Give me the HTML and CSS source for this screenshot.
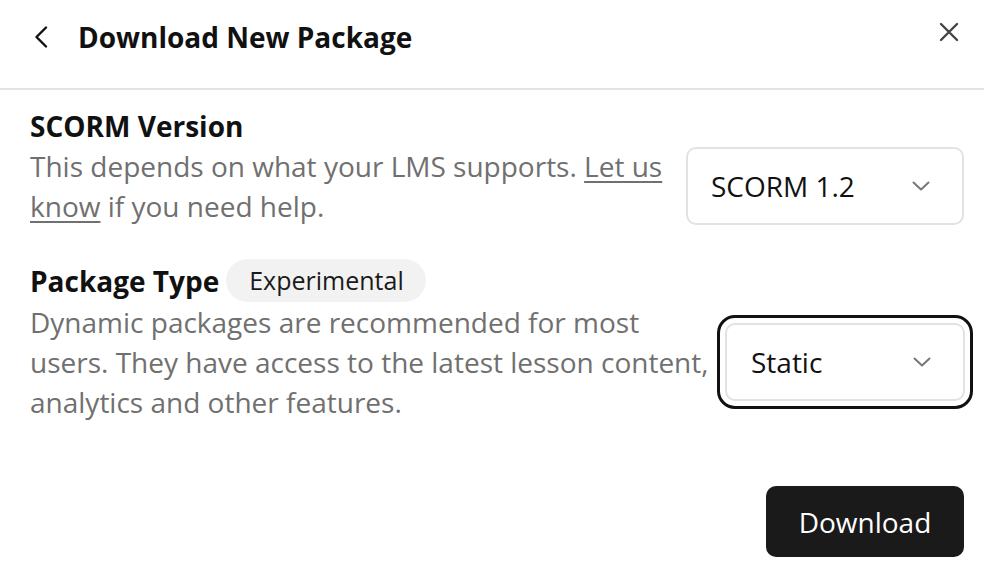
FILE: index.html
```html
<!DOCTYPE html>
<html lang="en">
<head>
<meta charset="utf-8">
<link rel="stylesheet" href="styles.css">
</head>
<body>
<div class="dialog">
  <header class="header">
    <button class="icon-btn back" aria-label="Back">
      <svg width="14" height="22" viewBox="0 0 14 22"><path d="M12 1.5 L2.5 11 L12 20.5" fill="none" stroke="#111" stroke-width="2.4" stroke-linecap="round" stroke-linejoin="round"/></svg>
    </button>
    <h1 class="title">Download New Package</h1>
    <button class="icon-btn close" aria-label="Close">
      <svg width="20" height="20" viewBox="0 0 20 20"><path d="M2 2 L18 18 M18 2 L2 18" fill="none" stroke="#444" stroke-width="2.4" stroke-linecap="round"/></svg>
    </button>
  </header>
  <main class="content">
    <section class="field">
      <div class="field-head">
        <h2 class="label">SCORM Version</h2>
      </div>
      <div class="field-row">
        <p class="desc">This depends on what your LMS supports. <a href="#" class="link">Let us know</a> if you need help.</p>
        <div class="select select-version">
          <span class="select-value">SCORM 1.2</span>
          <svg class="chev" width="18" height="10" viewBox="0 0 18 10"><path d="M1.5 1.5 L9 8.5 L16.5 1.5" fill="none" stroke="#777" stroke-width="2" stroke-linecap="round" stroke-linejoin="round"/></svg>
        </div>
      </div>
    </section>
    <section class="field field-second">
      <div class="field-head">
        <h2 class="label">Package Type</h2>
        <span class="badge">Experimental</span>
      </div>
      <div class="field-row">
        <p class="desc desc-narrow">Dynamic packages are recommended for most users. They have access to the latest lesson content, analytics and other features.</p>
        <div class="select select-type focused">
          <span class="select-value">Static</span>
          <svg class="chev" width="18" height="10" viewBox="0 0 18 10"><path d="M1.5 1.5 L9 8.5 L16.5 1.5" fill="none" stroke="#777" stroke-width="2" stroke-linecap="round" stroke-linejoin="round"/></svg>
        </div>
      </div>
    </section>
    <div class="actions">
      <button class="primary">Download</button>
    </div>
  </main>
</div>
</body>
</html>
```

FILE: styles.css
```css
* { box-sizing: border-box; }
html, body { margin: 0; padding: 0; background: #fff; }
body {
  font-family: "Open Sans", "Noto Sans", sans-serif;
  color: #111;
  width: 984px;
  height: 587px;
  overflow: hidden;
}
.dialog { display: flex; flex-direction: column; }
.header {
  height: 90px;
  border-bottom: 2px solid #e3e3e3;
  display: flex;
  align-items: center;
  padding: 0 25px 0 34px;
}
.icon-btn {
  background: none;
  border: 0;
  padding: 0;
  display: flex;
  cursor: pointer;
}
.back { margin-top: -14px; }
.close { margin-left: auto; margin-top: -24px; }
.title {
  margin: -14px 0 0 30px;
  font-size: 28px;
  font-weight: 700;
  line-height: 40px;
  color: #111;
}
.content { padding: 16px 20px 0 30px; display: flex; flex-direction: column; }
.field { display: flex; flex-direction: column; }
.field-second { margin-top: 33px; }
.field-head { display: flex; align-items: center; gap: 7px; }
.label {
  margin: 0;
  font-size: 28px;
  font-weight: 700;
  line-height: 40px;
  color: #111;
}
.badge {
  height: 43px;
  padding: 0 22px 0 23px;
  border-radius: 22px;
  background: #f2f2f2;
  font-size: 25px;
  line-height: 43px;
  color: #1a1a1a;
}
.field-row { display: flex; align-items: center; justify-content: space-between; }
.desc {
  margin: 0;
  font-size: 28px;
  line-height: 40px;
  color: #707070;
  width: 640px;
}
.desc-narrow { width: 682px; }
.link { color: #707070; text-decoration: underline; text-underline-offset: 4px; text-decoration-thickness: 2px; }
.select {
  height: 78px;
  border: 2px solid #e2e2e2;
  border-radius: 10px;
  display: flex;
  align-items: center;
  justify-content: space-between;
  padding: 0 32px 0 23px;
  background: #fff;
  flex-shrink: 0;
}
.select-version { width: 278px; }
.select-type { width: 240px; margin-right: -1px; padding-left: 24px; }
.focused { outline: 3px solid #111; outline-offset: 5px; border-radius: 10px; }
.select-value { font-size: 28px; color: #111; }
.chev { display: block; }
.actions { display: flex; justify-content: flex-end; margin-top: 64px; }
.primary {
  width: 198px;
  height: 71px;
  background: #1a1a1a;
  color: #fff;
  border: 0;
  border-radius: 10px;
  font-family: "Open Sans", "Noto Sans", sans-serif;
  font-size: 28px;
  cursor: pointer;
}
```
